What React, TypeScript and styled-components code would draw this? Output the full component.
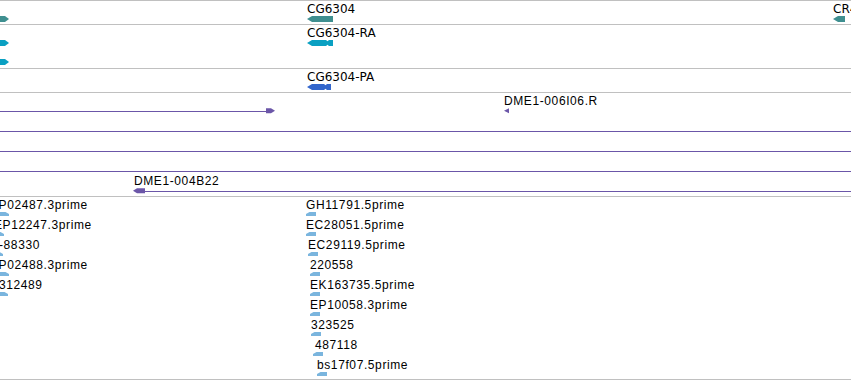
import styled, { createGlobalStyle } from 'styled-components';

const TEAL = '#3f8f90';
const CYAN = '#0aa0c2';
const BLUE = '#3366cc';
const PURPLE = '#6b56a8';
const EST = '#7ab5de';

const GlobalStyle = createGlobalStyle`
  html, body {
    margin: 0;
    padding: 0;
    background: #ffffff;
  }
`;

const Panel = styled.div`
  width: 851px;
  height: 380px;
  overflow: hidden;
  display: flex;
  flex-direction: column;
  background: #ffffff;
`;

const Track = styled.div<{ $h: number; $last?: boolean }>`
  position: relative;
  flex: none;
  box-sizing: border-box;
  height: ${(p) => p.$h}px;
  border-top: 1px solid #c0c0c0;
  border-bottom: ${(p) => (p.$last ? '1px solid #c0c0c0' : 'none')};
  overflow: hidden;
`;

// features sit at their genome coordinate inside a track
const Feature = styled.div<{ $x: number; $y: number }>`
  position: absolute;
  left: ${(p) => p.$x}px;
  top: ${(p) => p.$y}px;
  display: flex;
  flex-direction: column;
  align-items: flex-start;
`;

const Label = styled.div<{ $gene?: boolean; $dx?: number }>`
  height: 14px;
  line-height: 14px;
  margin-left: ${(p) => p.$dx ?? 0}px;
  font-family: ${(p) =>
    p.$gene ? '"DejaVu Sans", Verdana, sans-serif' : '"Liberation Sans", Arial, sans-serif'};
  font-size: 12px;
  letter-spacing: ${(p) => (p.$gene ? '0' : '0.6px')};
  color: #000000;
  white-space: nowrap;
`;

const Glyph = styled.svg`
  display: block;
  flex: none;
  overflow: visible;
`;

type Dir = 'left' | 'right';

const GeneArrow = ({ w, color, dir = 'left', tail = false }: { w: number; color: string; dir?: Dir; tail?: boolean }) => {
  let pts = `0,3 5,0 ${w},0 ${w},6 5,6`;
  if (dir === 'right') pts = `0,0 ${w - 4},0 ${w},3 ${w - 4},6 0,6`;
  else if (tail)
    pts = `0,3 5,0 ${w - 7},0 ${w - 5.5},1.2 ${w - 4},0 ${w},0 ${w},6 ${w - 4},6 ${w - 5.5},4.8 ${w - 7},6 5,6`;
  return (
    <Glyph width={w} height={6} viewBox={`0 0 ${w} 6`}>
      <polygon points={pts} fill={color} />
    </Glyph>
  );
};

const EstArrow = ({ dir }: { dir: Dir }) => (
  <Glyph width={10} height={5} viewBox="0 0 10 5">
    <polygon points={dir === 'left' ? '0,2 3.5,0 10,0 10,4 0,4' : '0,0 6.5,0 10,2 10,4 0,4'} fill={EST} />
  </Glyph>
);

const CloneLine = ({ w, head }: { w: number; head?: Dir }) => (
  <Glyph width={w} height={6} viewBox={`0 0 ${w} 6`}>
    <rect x={head === 'left' ? 8 : 0} y={3} width={w - 8} height={1} fill={PURPLE} />
    {head === 'right' && (
      <polygon points={`${w - 9},0.3 ${w - 4},0.3 ${w},2.8 ${w - 4},5.3 ${w - 9},5.3`} fill={PURPLE} />
    )}
    {head === 'left' && <polygon points="0,2.8 4,0.3 12,0.3 12,5.3 4,5.3" fill={PURPLE} />}
  </Glyph>
);

const SmallArrow = () => (
  <Glyph width={5} height={6} viewBox="0 0 5 6">
    <polygon points="0,2.8 5,0.3 5,5.3" fill={PURPLE} />
  </Glyph>
);

const estLeft = [
  { name: 'EP02487.3prime', x: -1, dx: -9 },
  { name: 'EP12247.3prime', x: -6, dx: 0 },
  { name: '-88330', x: -7, dx: 6 },
  { name: 'EP02488.3prime', x: -1, dx: -9 },
  { name: '312489', x: -2, dx: 1 },
];

const estRight = [
  { name: 'GH11791.5prime', x: 306, dx: 0 },
  { name: 'EC28051.5prime', x: 306, dx: 0 },
  { name: 'EC29119.5prime', x: 308, dx: 0 },
  { name: '220558', x: 310, dx: 0 },
  { name: 'EK163735.5prime', x: 310, dx: 0 },
  { name: 'EP10058.3prime', x: 310, dx: 0 },
  { name: '323525', x: 311, dx: 0 },
  { name: '487118', x: 313, dx: 2 },
  { name: 'bs17f07.5prime', x: 317, dx: 0 },
];

const App = () => (
  <>
    <GlobalStyle />
    <Panel>
      <Track $h={24}>
        <Feature $x={0} $y={1}>
          <Label $gene />
          <GeneArrow w={9} color={TEAL} dir="right" />
        </Feature>
        <Feature $x={307} $y={1}>
          <Label $gene>CG6304</Label>
          <GeneArrow w={26} color={TEAL} />
        </Feature>
        <Feature $x={833} $y={1}>
          <Label $gene>CR43432</Label>
          <GeneArrow w={12} color={TEAL} />
        </Feature>
      </Track>

      <Track $h={44}>
        <Feature $x={0} $y={1}>
          <Label $gene />
          <GeneArrow w={9} color={CYAN} dir="right" />
        </Feature>
        <Feature $x={0} $y={20}>
          <Label $gene />
          <GeneArrow w={9} color={CYAN} dir="right" />
        </Feature>
        <Feature $x={307} $y={1}>
          <Label $gene>CG6304-RA</Label>
          <GeneArrow w={26} color={CYAN} tail />
        </Feature>
      </Track>

      <Track $h={24}>
        <Feature $x={307} $y={1}>
          <Label $gene>CG6304-PA</Label>
          <GeneArrow w={24} color={BLUE} tail />
        </Feature>
      </Track>

      <Track $h={104}>
        <Feature $x={-20} $y={1}>
          <Label />
          <CloneLine w={295} head="right" />
        </Feature>
        <Feature $x={504} $y={1}>
          <Label>DME1-006I06.R</Label>
          <SmallArrow />
        </Feature>
        {[21, 41, 61].map((y) => (
          <Feature key={y} $x={-20} $y={y}>
            <Label />
            <CloneLine w={900} />
          </Feature>
        ))}
        <Feature $x={133} $y={81}>
          <Label $dx={1}>DME1-004B22</Label>
          <CloneLine w={760} head="left" />
        </Feature>
      </Track>

      <Track $h={184} $last>
        {estLeft.map((e, i) => (
          <Feature key={e.name} $x={e.x} $y={1 + i * 20}>
            <Label $dx={e.dx}>{e.name}</Label>
            <EstArrow dir="right" />
          </Feature>
        ))}
        {estRight.map((e, i) => (
          <Feature key={e.name} $x={e.x} $y={1 + i * 20}>
            <Label $dx={e.dx}>{e.name}</Label>
            <EstArrow dir="left" />
          </Feature>
        ))}
      </Track>
    </Panel>
  </>
);

export default App;
